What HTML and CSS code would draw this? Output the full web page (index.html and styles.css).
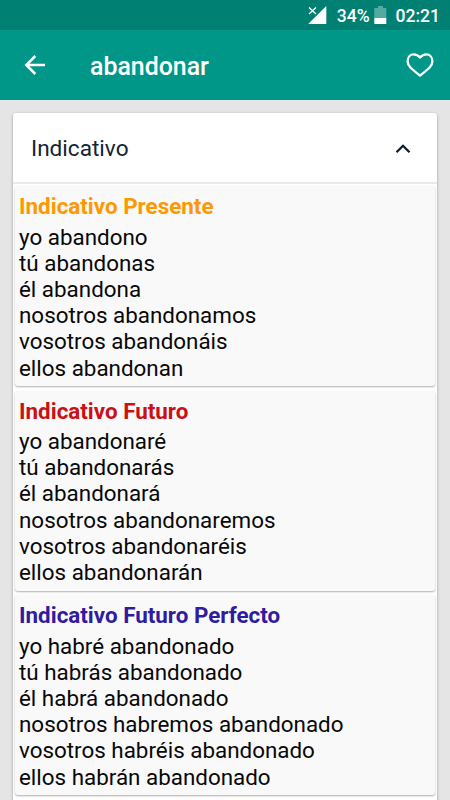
FILE: index.html
```html
<!DOCTYPE html>
<html lang="es"><head><meta charset="utf-8"><title>abandonar</title><link rel="stylesheet" href="styles.css"></head>
<body>
<div class="status">
<svg class="signal" width="20" height="20" viewBox="0 0 20 20"><path d="M19.3 1V19H1.2Z" fill="#fff"/><path d="M2 2.5L9 9M9 2.5L2 9" stroke="#fff" stroke-width="1.3"/></svg>
<span class="pct">34%</span>
<svg class="battery" width="13" height="18" viewBox="0 0 13 18"><path d="M4 0H9V2H12.3V12H.3V2H4Z" fill="#52aaa1"/><path d="M.3 12H12.3V18H.3Z" fill="#fff"/></svg>
<span class="time">02:21</span>
</div>
<header class="bar">
<svg class="back" width="22" height="22" viewBox="0 0 22 22"><path d="M21 11H2.5M11.3 2L2.3 11L11.3 20" fill="none" stroke="#fff" stroke-width="2.5"/></svg>
<h1>abandonar</h1>
<svg class="heart" width="28" height="24" viewBox="0 0 28 24"><path fill="none" stroke="#fff" stroke-width="2.3" stroke-linejoin="round" d="M14 4.6C12.2 2.4 10.2 1.4 7.8 1.4C4 1.4 1.6 4.5 1.6 8.3C1.6 13 5.5 15.8 14 22.6C22.5 15.8 26.4 13 26.4 8.3C26.4 4.5 24 1.4 20.2 1.4C17.8 1.4 15.8 2.4 14 4.6Z"/></svg>
</header>
<main class="panel">
<div class="head"><span>Indicativo</span><svg width="16" height="10" viewBox="0 0 16 10"><path d="M1.5 8.3L8 1.8L14.5 8.3" fill="none" stroke="#0e1e30" stroke-width="2.3"/></svg></div>
<section class="card"><h2 class="orange">Indicativo Presente</h2><p>yo abandono</p><p>tú abandonas</p><p>él abandona</p><p>nosotros abandonamos</p><p>vosotros abandonáis</p><p>ellos abandonan</p></section>
<section class="card"><h2 class="red">Indicativo Futuro</h2><p>yo abandonaré</p><p>tú abandonarás</p><p>él abandonará</p><p>nosotros abandonaremos</p><p>vosotros abandonaréis</p><p>ellos abandonarán</p></section>
<section class="card"><h2 class="indigo">Indicativo Futuro Perfecto</h2><p>yo habré abandonado</p><p>tú habrás abandonado</p><p>él habrá abandonado</p><p>nosotros habremos abandonado</p><p>vosotros habréis abandonado</p><p>ellos habrán abandonado</p></section>
</main>
</body></html>
```
FILE: styles.css
```css
* { box-sizing: border-box; }
body { margin: 0; height: 800px; overflow: hidden; background: #e5e5e5; font-family: Roboto, sans-serif; color: #080808; }
.status { height: 30px; background: #008073; color: #fff; display: flex; align-items: center; justify-content: flex-end; padding: 1px 10px 0 0; font-size: 17.5px; font-weight: 500; }
.signal { margin: -2px 10px 0 0; }
.battery { margin: -1px 9px 0 4px; }
.bar { height: 70px; background: #009788; color: #fff; display: flex; align-items: center; padding: 0 16px 0 24px; }
.bar h1 { margin: 2px auto 0 44px; font-size: 24.9px; font-weight: 500; }
.heart { margin-top: 0; }
.panel { margin: 13px 13px 0 12.5px; background: #fff; border-radius: 3px; box-shadow: 0 1px 3px rgba(0,0,0,.35); height: 720px; padding-bottom: 1px; }
.head { height: 71px; display: flex; justify-content: space-between; align-items: center; padding: 2px 26.5px 0 18.5px; font-size: 22.6px; color: #142333; border-bottom: 2px solid #ebebeb; }
.card { margin: 2px 2px 4.5px 2.5px; height: 200px; padding: 5px 4px; background: #f9f9f9; border-radius: 3px; box-shadow: 0 1px 2px rgba(0,0,0,.32); }
.card h2 { margin: 0 0 3.5px; font-size: 22.4px; line-height: 31px; height: 29px; font-weight: 700; }
.card p { margin: 0; font-size: 22.4px; line-height: 26.2px; }
.orange { color: #ff9800; }
.red { color: #cb1015; }
.indigo { color: #311b9e; }
```
